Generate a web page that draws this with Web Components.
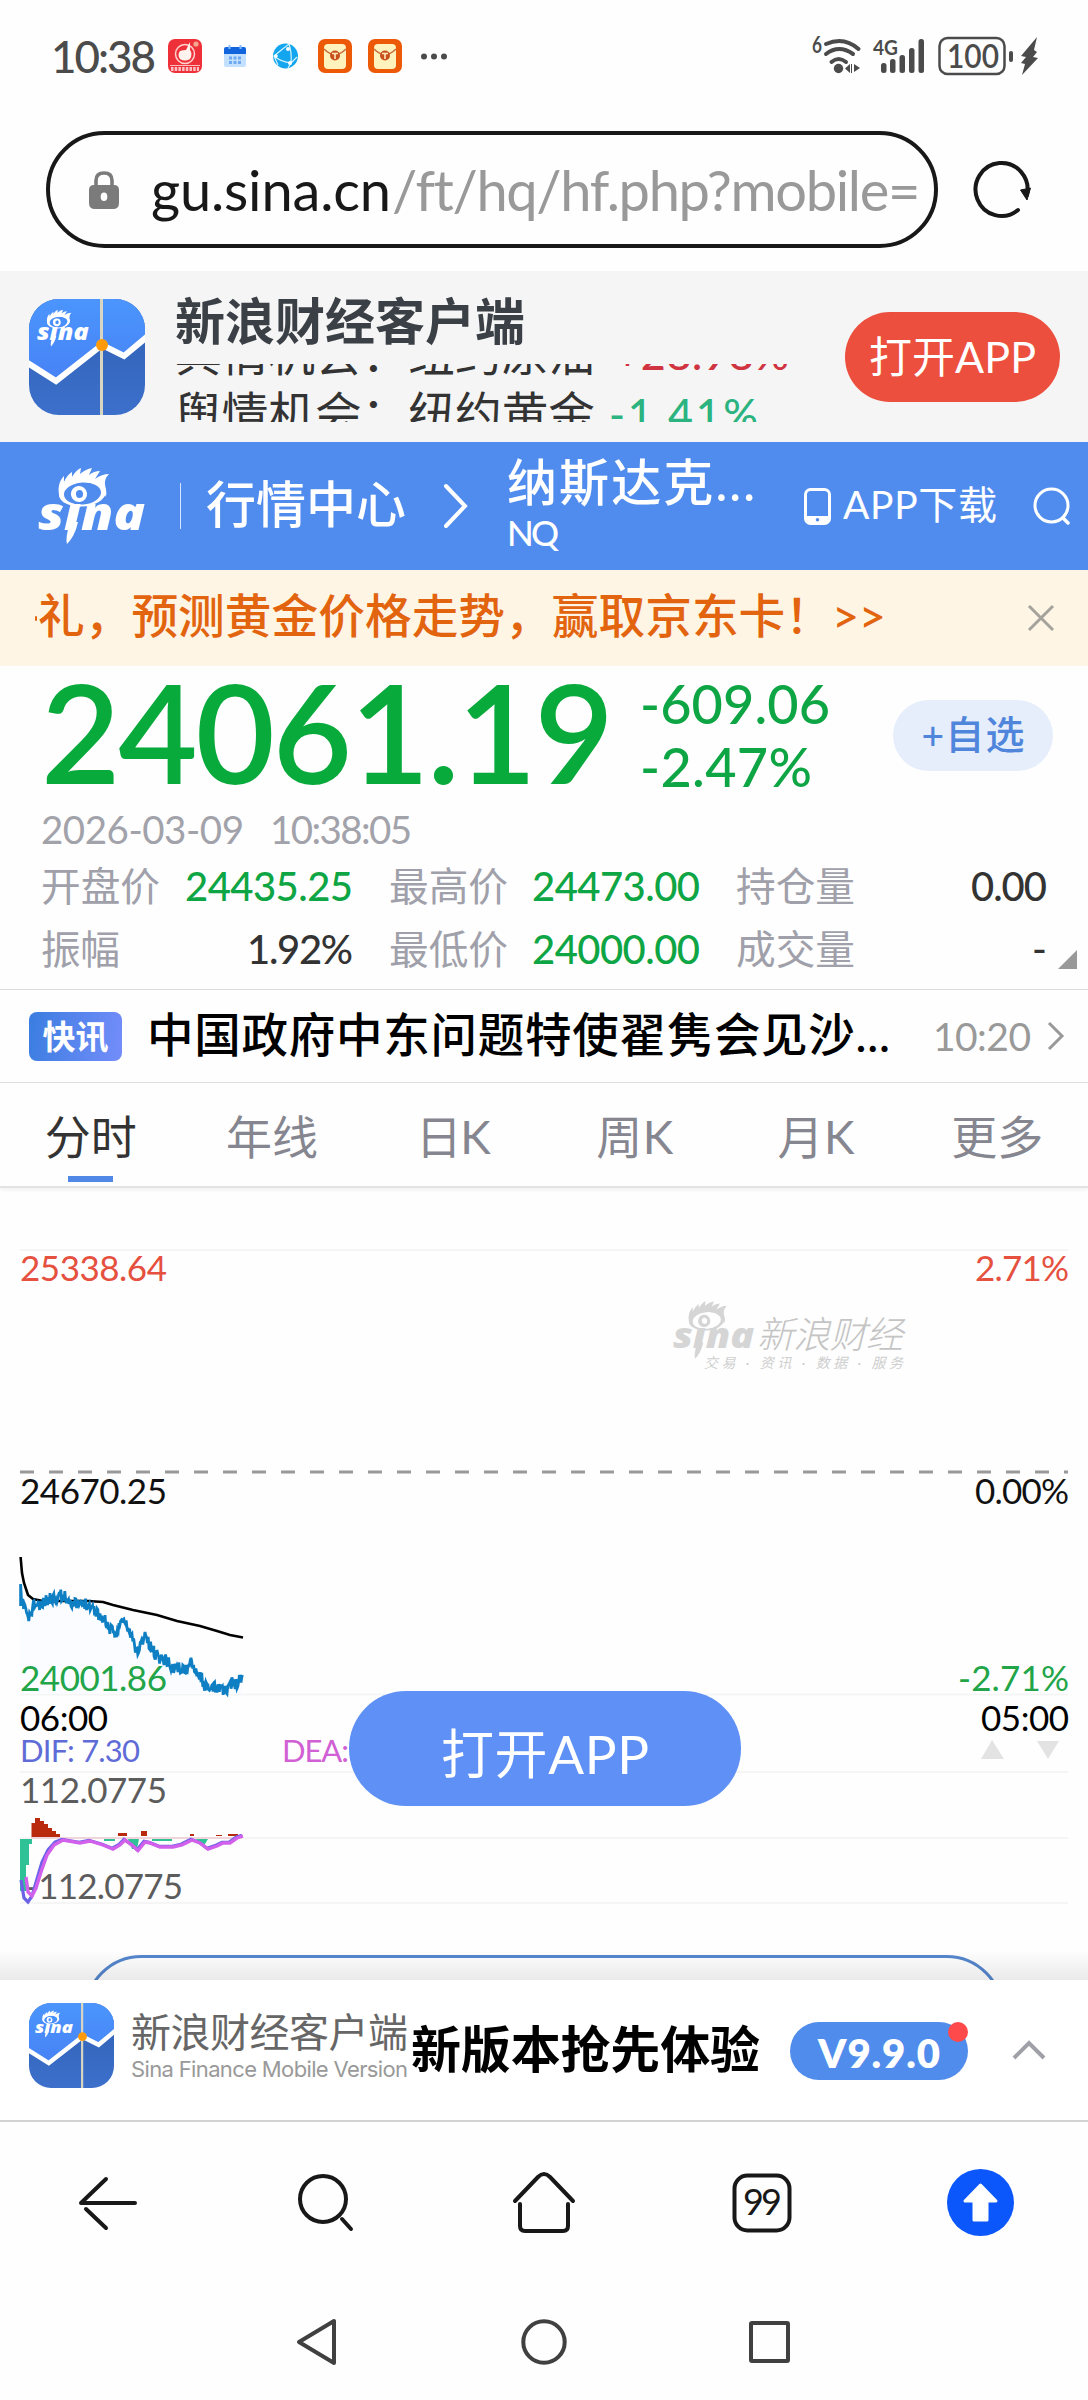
<!DOCTYPE html>
<html lang="zh-CN">
<head>
<meta charset="utf-8">
<title>纳斯达克 NQ</title>
<style>
    body {
        margin: 0;
        width: 1088px;
        height: 2400px;
        overflow: hidden;
        background: #fefefe;
        font-family: Lato, "Noto Sans CJK SC", sans-serif;
    }
</style>
</head>
<body>
<status-bar></status-bar>
<address-bar></address-bar>
<app-promo></app-promo>
<sina-header></sina-header>
<notice-bar></notice-bar>
<quote-panel></quote-panel>
<news-row time="10:20">中国政府中东问题特使翟隽会见沙...</news-row>
<chart-tabs></chart-tabs>
<quote-chart></quote-chart>
<download-bar></download-bar>
<browser-toolbar></browser-toolbar>
<system-nav></system-nav>

<script>
function define(name, html, ready) {
    customElements.define(name, class extends HTMLElement {
        connectedCallback() {
            if (this.shadowRoot) return;
            this.attachShadow({ mode: 'open' });
            this.shadowRoot.innerHTML = html;
            if (ready) ready.call(this, this.shadowRoot);
        }
    });
}

// One line of text, tracked so that it fills the width it is given
class FitText extends HTMLElement {
    connectedCallback() {
        const size = this.getAttribute('size');
        const width = parseFloat(this.getAttribute('width'));
        this.attachShadow({ mode: 'open' });
        this.shadowRoot.innerHTML = `
            <style>
                :host { display: block; flex: none; line-height: 1; font-size: ${size}px; width: ${width}px; }
                span { display: block; width: max-content; white-space: pre; }
            </style>
            <span><slot></slot></span>
        `;
        const span = this.shadowRoot.querySelector('span');
        const natural = span.getBoundingClientRect().width;
        const count = Array.from(this.textContent).length;
        if (count > 1) {
            const gap = (width - natural) / (count - 1);
            span.style.letterSpacing = gap + 'px';
            span.style.marginRight = -gap + 'px';
        }
    }
}
customElements.define('fit-text', FitText);

define('sina-logo', `
    <style>
        :host { display: block; color: #fff; }
        svg { display: block; width: 100%; height: 100%; overflow: visible; }
    </style>
    <svg viewBox="0 0 108 78" fill="currentColor">
        <path d="M22 31C19 22 21 14 26 9L26 15Q29 8 34 5L34 10Q38 3 43 1L42 7Q48 2 54 1L51 8Q56 4 62 4L57 12Q64 7 71 7Q66 12 67 18Q69 25 68 30Q64 15 45 15Q26 16 22 31Z"/>
        <path fill-rule="evenodd" d="M21 27A23.500 13.500 -5 0 0 68 25A23.500 13.500 -5 0 0 21 27ZM26 28A18.500 11 -5 0 1 63 25A18.500 11 -5 0 1 26 28Z"/>
        <path fill-rule="evenodd" d="M33 28A8 8 0 1 0 49 26A8 8 0 1 0 33 28ZM38 27.500A3.500 4 0 1 1 45 26.500A3.500 4 0 1 1 38 27.500Z"/>
        <path d="M32 55L40 55Q37 69 29 77Q27 72 32 55Z"/>
        <text x="0" y="63" font-family="Open Sans" font-size="46" font-weight="800" font-style="italic" textLength="107" lengthAdjust="spacingAndGlyphs">sına</text>
    </svg>
`);

define('app-icon', `
    <style>
        :host { display: block; position: relative; flex: none; }
        svg { display: block; width: 100%; height: 100%; }
        sina-logo { position: absolute; left: 7%; top: 9%; width: 45%; height: 33%; }
    </style>
    <svg viewBox="0 0 116 116">
        <defs>
            <clipPath id="round"><rect width="116" height="116" rx="30"/></clipPath>
            <linearGradient id="sky" x1="0" y1="0" x2="0" y2="1"><stop offset="0" stop-color="#4b95fd"/><stop offset="1" stop-color="#4782f5"/></linearGradient>
            <linearGradient id="sea" x1="0" y1="0" x2="0" y2="1"><stop offset="0" stop-color="#2f5fb2"/><stop offset="1" stop-color="#3c70cb"/></linearGradient>
        </defs>
        <g clip-path="url(#round)">
            <rect width="116" height="116" fill="url(#sea)"/>
            <path d="M0 0H116V41L95 57L73 47L27 83L0 65Z" fill="url(#sky)"/>
            <path d="M-3 63L27 82L73 46L95 57L119 37" fill="none" stroke="#fff" stroke-width="6"/>
            <path d="M72.5 0V116" stroke="#d8d6c0" stroke-width="3"/>
            <circle cx="73" cy="46" r="6" fill="#ff9b0b"/>
        </g>
    </svg>
    <sina-logo></sina-logo>
`);

define('status-bar', `
    <style>
        :host { display: flex; align-items: center; height: 112px; padding-left: 51px; color: #4b4b4b; }
        svg { display: block; flex: none; overflow: visible; }
        .signal { margin-left: 365px; }
        fit-text { font-weight: 500; }
    </style>
    <fit-text size="44" width="105">10:38</fit-text>
    <svg style="margin-left:12px" width="34" height="34" viewBox="0 0 34 34">
        <rect width="34" height="34" rx="7" fill="#ee3038"/>
        <circle cx="17" cy="15" r="9.5" fill="none" stroke="#ffd3cf" stroke-width="1.5"/>
        <path d="M12 12Q15 11 18 11L22 3L22 11Q25 15 22 20Q17 23 12 20Q9 16 12 12Z" fill="#fff3ee"/>
        <circle cx="28" cy="5" r="2.6" fill="#f6a690"/>
        <path d="M2 26.500H32" stroke="#fbb" stroke-width="1"/>
        <path d="M3 30H31" stroke="#fff" stroke-width="4" stroke-dasharray="2.500 1.200" opacity=".7"/>
    </svg>
    <svg style="margin-left:22px" width="22" height="23" viewBox="0 0 22 23">
        <rect y="4" width="22" height="18" rx="2" fill="#c3e1ff"/>
        <path d="M0 9V4Q0 2 2 2H20Q22 2 22 4V9Z" fill="#1264dc"/>
        <path d="M5.500 0V4M16.500 0V4" stroke="#86bcff" stroke-width="2"/>
        <path d="M5 13H17M5 17.500H17" stroke="#6fa9ef" stroke-width="3" stroke-dasharray="3 1.500"/>
    </svg>
    <svg style="margin-left:27px" width="25" height="26" viewBox="0 0 25 26">
        <circle cx="12.500" cy="13" r="12.500" fill="#13a6ee"/>
        <path d="M16 1Q12 4 1 13Q8 19 18 20Q19 10 16 1M18 20L24 14M18 20L15 25M1 13L5 22" fill="none" stroke="#d6f2ff" stroke-width="1.200"/>
        <g fill="#fff"><circle cx="15" cy="6" r="2"/><circle cx="3" cy="13" r="1.800"/><circle cx="17" cy="20" r="2"/></g>
    </svg>
    <svg style="margin-left:20px" width="84" height="34" viewBox="0 0 84 34">
        <defs><g id="env">
            <rect width="34" height="34" rx="7" fill="#ed5a07"/>
            <rect x="6" y="5" width="22" height="25" rx="4" fill="#fff2bd"/>
            <path d="M6 10Q17 21 28 10" fill="none" stroke="#c76a3c" stroke-width="1.500"/>
            <circle cx="17" cy="16.500" r="5" fill="#c8501c"/>
            <path d="M14 14.500H20M17 14.500V20" stroke="#ffe9c0" stroke-width="1.600"/>
        </g></defs>
        <use href="#env"/><use href="#env" x="50"/>
    </svg>
    <svg style="margin-left:19px" width="26" height="7"><g fill="#4b4b4b"><circle cx="3" cy="3.500" r="3"/><circle cx="13" cy="3.500" r="3"/><circle cx="23" cy="3.500" r="3"/></g></svg>
    <svg class="signal" width="226" height="40" viewBox="0 0 226 40" fill="#4b4b4b">
        <text x="0" y="17" font-size="22" font-weight="700" textLength="10" lengthAdjust="spacingAndGlyphs">6</text>
        <g fill="none" stroke="#4b4b4b" stroke-width="4" stroke-linecap="round">
            <path d="M14 8Q32 0 46.500 13M14 18Q27 8 41 18M19.500 26Q26.500 20 34 26"/>
        </g>
        <circle cx="26.500" cy="32.500" r="4.700"/>
        <path d="M38 28V37L33 32.500ZM42 28L48 32L42 36Z"/>
        <path d="M39.500 28V37" stroke="#4b4b4b"/>
        <text x="61" y="19" font-size="21" font-weight="700" textLength="25" lengthAdjust="spacingAndGlyphs">4G</text>
        <rect x="69" y="27" width="5.500" height="10" rx="2.500"/><rect x="78" y="23" width="5.500" height="14" rx="2.500"/>
        <rect x="87.500" y="19" width="5.500" height="18" rx="2.500"/><rect x="97" y="12" width="5.500" height="25" rx="2.500"/>
        <rect x="106.500" y="3" width="5.500" height="34" rx="2.500"/>
        <rect x="127.500" y="2" width="65" height="36" rx="8" fill="none" stroke="#4b4b4b" stroke-width="2.500"/>
        <text x="135" y="32" font-size="33" font-weight="600" textLength="52" lengthAdjust="spacingAndGlyphs">100</text>
        <rect x="197" y="15" width="4" height="11" rx="2"/>
        <path d="M225 1L209 20L214 21L209 27L213 28L210 39L226 22L221 21L225 16L222 14Z"/>
    </svg>
`);

define('address-bar', `
    <style>
        :host { display: flex; align-items: center; height: 159px; box-sizing: border-box; padding: 0 0 4px 46px; }
        .pill { display: flex; align-items: center; box-sizing: border-box; width: 892px; height: 117px; border: 4px solid #181818; border-radius: 59px; padding-left: 39px; }
        .host { margin-left: 32px; color: #181818; }
        .path { margin-left: 1px; color: #999; }
        .reload { margin-left: 34px; }
    </style>
    <div class="pill">
        <svg width="30" height="38" viewBox="0 0 30 38">
            <path d="M7 15V9.500Q7 2 15 2T23 9.500V15" fill="none" stroke="#7b7b7b" stroke-width="3.600"/>
            <path fill="#7b7b7b" fill-rule="evenodd" d="M5 14H25Q30 14 30 19V32Q30 38 24 38H6Q0 38 0 32V19Q0 14 5 14ZM15 21.500A3.300 4.200 0 1 0 15 30A3.300 4.200 0 1 0 15 21.500Z"/>
        </svg>
        <fit-text class="host" size="56" width="240">gu.sina.cn</fit-text>
        <fit-text class="path" size="56" width="527">/ft/hq/hf.php?mobile=</fit-text>
    </div>
    <svg class="reload" width="60" height="60" viewBox="0 0 60 60">
        <path d="M46 50A26 26.500 0 1 1 55 35" fill="none" stroke="#181818" stroke-width="4" stroke-linecap="round"/>
        <path d="M48.500 30L58.500 28L55 40Z" fill="#181818" stroke="#181818" stroke-linejoin="round"/>
    </svg>
`);

define('app-promo', `
    <style>
        :host { display: flex; align-items: center; height: 171px; background: #f5f5f5; }
        app-icon { width: 116px; height: 116px; margin-left: 29px; }
        .text { width: 640px; height: 171px; margin-left: 30px; }
        .title { margin-top: 25px; font-weight: 700; color: #3b4046; }
        /* the ticker is caught between two lines */
        .ticker { height: 58px; margin-top: 18px; overflow: hidden; color: #333; }
        .line { display: flex; align-items: center; height: 60px; gap: 14px; }
        .line:first-child { margin-top: -41px; }
        .up { color: #d03440; margin-left: 6px; }
        .down { color: #2bb380; }
        .up, .down { font-weight: 500; }
        .open { display: flex; align-items: center; justify-content: center; width: 215px; height: 90px; margin-left: 30px; border-radius: 45px; background: #ec4f3d; color: #fff; }
    </style>
    <app-icon></app-icon>
    <div class="text">
        <fit-text class="title" size="50" width="350">新浪财经客户端</fit-text>
        <div class="ticker">
            <div class="line"><fit-text size="46.700" width="420">舆情机会：纽约原油</fit-text><fit-text class="up" size="43" width="174">+28.98%</fit-text></div>
            <div class="line"><fit-text size="46.700" width="420">舆情机会：纽约黄金</fit-text><fit-text class="down" size="43" width="149">-1.41%</fit-text></div>
        </div>
    </div>
    <div class="open"><fit-text size="43" width="167">打开APP</fit-text></div>
`);

define('sina-header', `
    <style>
        :host { display: flex; align-items: center; height: 128px; background: #508cee; color: #fff; font-weight: 500; }
        svg { display: block; flex: none; }
        sina-logo { width: 108px; height: 78px; margin-left: 38px; }
        .rule { width: 1px; height: 46px; margin: 0 25px 0 34px; background: #d5e4ff; }
        .name { margin: 0 0 6px 38px; }
        .name fit-text + fit-text { margin-top: 8px; }
        .load { margin: 0 0 4px 12px; font-weight: 400; }
    </style>
    <sina-logo></sina-logo>
    <div class="rule"></div>
    <fit-text style="margin-bottom:4px" size="50" width="200">行情中心</fit-text>
    <svg style="margin-left:37px" width="26" height="46" viewBox="0 0 26 46"><path d="M3 3L22 23L3 43" fill="none" stroke="#fff" stroke-width="4" stroke-linecap="round"/></svg>
    <div class="name">
        <fit-text size="50" width="248">纳斯达克...</fit-text>
        <fit-text size="35" width="52">NQ</fit-text>
    </div>
    <svg style="margin-left:49px" width="27" height="37" viewBox="0 0 27 37">
        <rect x="1.500" y="1.500" width="24" height="34" rx="5" fill="none" stroke="#fff" stroke-width="3"/>
        <path fill-rule="evenodd" d="M2 28H25V35H2ZM13.500 30A1.700 1.700 0 1 0 13.500 33.600A1.700 1.700 0 1 0 13.500 30" fill="#fff"/>
    </svg>
    <fit-text class="load" size="39" width="154">APP下载</fit-text>
    <svg style="margin-left:36px" width="38" height="38" viewBox="0 0 38 38"><circle cx="18.500" cy="18.500" r="16.500" fill="none" stroke="#fff" stroke-width="3"/><path d="M30 31L35 36" stroke="#fff" stroke-width="3.500" stroke-linecap="round"/></svg>
`);

define('notice-bar', `
    <style>
        :host { display: flex; align-items: center; height: 96px; background: #fff5e5; color: #e2640f; font-weight: 500; }
        .dot { width: 2px; height: 5px; margin: 0 1px 0 35px; border-radius: 1px; background: #e2640f; }
        fit-text { margin-bottom: 6px; }
        svg { margin-left: 141px; }
    </style>
    <div class="dot"></div>
    <fit-text size="46.700" width="794">礼，预测黄金价格走势，赢取京东卡！</fit-text>
    <fit-text style="margin-left:0" size="47" width="54">&gt;&gt;</fit-text>
    <svg width="28" height="28" viewBox="0 0 28 28"><path d="M2 2L26 26M26 2L2 26" stroke="#a5a29c" stroke-width="3"/></svg>
`);

define('quote-panel', `
    <style>
        :host { display: block; height: 323px; border-bottom: 1px solid #dcdcdc; color: #333; position: relative; }
        .top { display: flex; align-items: center; height: 138px; }
        .price { margin: 0 0 8px 41px; color: #09aa3c; font-weight: 600; }
        .change { margin-left: 26px; color: #0ea544; font-weight: 500; }
        .change fit-text + fit-text { margin-top: 9px; }
        .add { display: flex; align-items: center; justify-content: center; width: 160px; height: 71px; border-radius: 36px; background: #e6eefb; color: #4f86db; margin-left: auto; margin-right: 35px; }
        .add fit-text { margin-bottom: 2px; font-weight: 500; }
        .date { display: flex; gap: 26px; height: 51px; align-items: center; margin-left: 41px; color: #a2a2aa; }
        .grid { display: grid; grid-template-columns: 312px 311px 311px; column-gap: 36px; grid-template-rows: 63px 63px; margin: -1px 0 0 41px; width: 1006px; }
        .cell { display: flex; justify-content: space-between; align-items: center; }
        .cell fit-text:first-child { color: #a0a0aa; }
        .green { color: #0ea544; }
        .cell fit-text:last-child { font-weight: 500; }
        .corner { position: absolute; right: 11px; bottom: 20px; }
    </style>
    <div class="top">
        <fit-text class="price" size="137" width="573">24061.19</fit-text>
        <div class="change"><fit-text size="54" width="190">-609.06</fit-text><fit-text size="54" width="172">-2.47%</fit-text></div>
        <div class="add"><fit-text size="39" width="103">+自选</fit-text></div>
    </div>
    <div class="date"><fit-text size="38.500" width="203">2026-03-09</fit-text><fit-text size="38.500" width="142">10:38:05</fit-text></div>
    <div class="grid"></div>
    <svg class="corner" width="19" height="19"><path d="M19 0V19H0Z" fill="#999"/></svg>
`, function(root) {
    const cells = [
        ['开盘价', 119, '24435.25', 168, 1], ['最高价', 119, '24473.00', 168, 1], ['持仓量', 119, '0.00', 76, 0],
        ['振幅', 79, '1.92%', 106, 0], ['最低价', 119, '24000.00', 168, 1], ['成交量', 119, '-', 15, 0]
    ];
    root.querySelector('.grid').innerHTML = cells.map(([label, lw, value, vw, green]) => `
        <div class="cell"><fit-text size="39.700" width="${lw}">${label}</fit-text><fit-text class="${green ? 'green' : ''}" size="40" width="${vw}">${value}</fit-text></div>
    `).join('');
});

define('news-row', `
    <style>
        :host { display: flex; align-items: center; height: 92px; border-bottom: 1px solid #dcdcdc; color: #000; }
        .tag { display: flex; align-items: center; justify-content: center; width: 93px; height: 49px; margin-left: 29px; border-radius: 8px; background: linear-gradient(100deg, #3a7de0, #748dfa); color: #fff; font-weight: 700; }
        .title { margin: 0 0 4px 25px; font-weight: 500; }
        .time { margin-left: 43px; color: #999; }
        svg { margin-left: 16px; }
    </style>
    <div class="tag"><fit-text size="33" width="66">快讯</fit-text></div>
`, function(root) {
    root.innerHTML += `
        <fit-text class="title" size="46.500" width="743">${this.textContent}</fit-text>
        <fit-text class="time" size="39" width="98">${this.getAttribute('time')}</fit-text>
        <svg width="18" height="30" viewBox="0 0 18 30"><path d="M2 2L15 15L2 28" fill="none" stroke="#999" stroke-width="3"/></svg>
    `;
});

define('chart-tabs', `
    <style>
        :host { display: grid; grid-template-columns: repeat(6, 1fr); height: 103px; border-bottom: 2px solid #e3e3e3; box-shadow: 0 2px 4px #f0f0f0; color: #868690; }
        div { display: flex; flex-direction: column; align-items: center; }
        fit-text { margin-top: 31px; }
        .on { color: #333; }
        .on::after { content: ""; width: 45px; height: 6px; margin-top: 16px; background: #5088e8; }
    </style>
    <div class="on"><fit-text size="46" width="92">分时</fit-text></div>
    <div><fit-text size="46" width="92">年线</fit-text></div>
    <div><fit-text size="46" width="75">日K</fit-text></div>
    <div><fit-text size="46" width="77">周K</fit-text></div>
    <div><fit-text size="46" width="77">月K</fit-text></div>
    <div><fit-text size="46" width="92">更多</fit-text></div>
`);

// The svg keeps page coordinates: its viewBox starts where the chart does
define('quote-chart', `
    <style>
        :host { display: block; position: relative; height: 792px; overflow: hidden; }
        svg { display: block; }
        .mark { position: absolute; left: 673px; top: 112px; width: 82px; height: 60px; color: #d5d5d5; }
        .open { position: absolute; left: 349px; top: 503px; width: 392px; height: 115px; border-radius: 57px; display: flex; align-items: center; justify-content: center; background: #5e90f5; color: #fff; }
        .open fit-text { margin-top: 10px; }
        .more { position: absolute; left: 84px; top: 767px; width: 920px; height: 115px; box-sizing: border-box; border: 3px solid #5586cc; border-radius: 58px; }
        .shade { position: absolute; left: 0; right: 0; bottom: 0; height: 30px; background: linear-gradient(rgba(0,0,0,0), rgba(0,0,0,.08)); }
    </style>
    <svg width="1088" height="792" viewBox="0 1188 1088 792">
        <g stroke="#f5f5f5" stroke-width="2"><path d="M20 1250H1068M20 1694.500H1068M20 1772H1068M20 1838H1068M20 1903H1068"/></g>
        <path d="M20 1472H1068" stroke="#999" stroke-width="3" stroke-dasharray="14 15"/>
        <path id="area" fill="#fafcff"/>
        <path id="avg" fill="none" stroke="#000" stroke-width="2.600"/>
        <path id="price" fill="none" stroke="#0f7fc4" stroke-width="2.800"/>
        <g font-size="35">
            <text x="20" y="1281" fill="#e5503f" textLength="147">25338.64</text>
            <text x="975" y="1281" fill="#e5503f" textLength="94">2.71%</text>
            <text x="20" y="1503.500" fill="#111" textLength="147">24670.25</text>
            <text x="975" y="1503.500" fill="#111" textLength="94">0.00%</text>
            <text x="20" y="1691" fill="#22a548" textLength="147">24001.86</text>
            <text x="958" y="1691" fill="#22a548" textLength="111">-2.71%</text>
            <text x="20" y="1731" fill="#000" textLength="88">06:00</text>
            <text x="981" y="1731" fill="#000" textLength="88">05:00</text>
            <text x="20" y="1803" fill="#5c5c5c" textLength="147">112.0775</text>
            <text x="26" y="1899" fill="#5c5c5c" textLength="157">-112.0775</text>
            <text x="20" y="1762" font-size="31" fill="#5f6bd6" textLength="120">DIF: 7.30</text>
            <text x="282" y="1762" font-size="31" fill="#d160d4" textLength="67">DEA:</text>
        </g>
        <path d="M981 1759L992 1740L1004 1759ZM1037 1741H1059L1048 1759Z" fill="#e3e3e3"/>
        <path d="M20 1839H32V1844H29V1865H26V1891H20ZM104 1839H115V1841H104ZM128 1839H139L137 1849H132ZM152 1839H172V1841H152ZM196 1839H208L205 1844H200Z" fill="#2fc296"/>
        <path d="M31.500 1837V1823H35V1818H40V1821H44V1824H48V1828H52V1831H56V1834H60V1837ZM118 1836V1833H127V1836ZM141 1836V1831H147V1836ZM190 1836V1834H194V1836ZM216 1836V1835H222V1836ZM228 1836V1834H238V1836Z" fill="#b92a0d"/>
        <path d="M31 1838H242" stroke="#f0d5da" stroke-width="2"/>
        <path id="dif" fill="none" stroke="#6b62e8" stroke-width="3.200"/>
        <path id="dea" fill="none" stroke="#d160ea" stroke-width="3.400"/>
        <g fill="#cfcfcf" font-style="italic">
            <text x="757" y="1348" font-size="37" font-weight="300" fill="#c4c4c4" textLength="146">新浪财经</text>
            <text x="704" y="1368" font-size="14" textLength="199">交易 · 资讯 · 数据 · 服务</text>
        </g>
    </svg>
    <sina-logo class="mark"></sina-logo>
    <div class="more"></div>
    <div class="shade"></div>
    <div class="open"><fit-text size="53" width="208">打开APP</fit-text></div>
`, function(root) {
    const toPath = points => 'M' + points.map(p => p.join(' ')).join('L');
    const trend = [[20.6,1590],[22,1604],[25,1605],[28,1620],[31,1614],[34,1604],[41,1607],[46,1600],[53,1598],[60,1595],[67,1598],[75,1604],[80,1605],[87,1603],[93,1608],[100,1616],[105,1620],[110,1630],[115,1634],[119,1627],[123,1620],[128,1628],[133,1641],[137,1652],[142,1642],[145,1633],[149,1645],[154,1652],[160,1658],[167,1660],[172,1668],[178,1668],[187,1670],[192,1661],[197,1672],[202,1679],[207,1690],[213,1688],[220,1687],[227,1692],[232,1683],[237,1684],[242.500,1674]];
    let seed = 11;
    const random = () => (seed = (seed * 16807) % 2147483647) / 2147483647;
    const price = [[20.600, 1585], [20.600, 1606]];
    for (let i = 0; i < trend.length - 1; i++) {
        const [x0, y0] = trend[i];
        const [x1, y1] = trend[i + 1];
        for (let x = x0; x < x1; x += 0.8) {
            const y = y0 + (y1 - y0) * (x - x0) / (x1 - x0) + (random() - 0.5) * 12;
            price.push([x.toFixed(1), Math.min(y, 1695).toFixed(1)]);
        }
    }
    price.push([242.500, 1675]);
    const avg = [[20.6,1557],[22,1573],[24,1583],[28,1595],[33,1599],[43,1601],[88,1601],[103,1602],[113,1605],[133,1610],[157,1615],[177,1621],[200,1626],[217,1631],[230,1635],[243,1637.600]];
    const tail = [[63,1840],[80,1843],[90,1841],[103,1845],[113,1849],[120,1845],[125,1840],[132,1845],[138,1850.500],[145,1842],[150,1843],[160,1847],[173,1847],[182,1845],[192,1840],[200,1843],[208,1849],[217,1846],[223,1843],[230,1843],[237,1838],[243,1836]];
    const dif = [[21,1880],[24,1898],[28,1902],[32,1896],[37,1879],[42,1862],[48,1850],[55,1842]].concat(tail.map(([x, y]) => [x - 1, y - 0.700]));
    const dea = [[26,1877],[28,1892],[32,1896],[36,1888],[41,1872],[47,1855],[54,1845]].concat(tail);
    root.getElementById('area').setAttribute('d', toPath([[20.6, 1694], ...trend, [242.5, 1694]]) + 'Z');
    root.getElementById('avg').setAttribute('d', toPath(avg));
    root.getElementById('price').setAttribute('d', toPath(price));
    root.getElementById('dif').setAttribute('d', toPath(dif));
    root.getElementById('dea').setAttribute('d', toPath(dea));
});

define('download-bar', `
    <style>
        :host { display: flex; align-items: center; height: 140px; border-bottom: 2px solid #d2d2d2; background: #fff; }
        app-icon { width: 85px; height: 85px; margin: 0 0 10px 29px; }
        .brand { margin: 0 0 8px 17px; color: #666; }
        .brand fit-text + fit-text { margin-top: 6px; color: #999; font-family: Inter, sans-serif; }
        .slogan { margin: 0 0 2px 3px; font-weight: 700; color: #000; }
        .version { display: flex; align-items: center; justify-content: center; position: relative; width: 178px; height: 58px; margin: 2px 0 0 30px; border-radius: 29px; background: #508cec; color: #fff; font-weight: 800; }
        .version::after { content: ""; position: absolute; top: 0; right: 0; width: 20px; height: 20px; border-radius: 50%; background: #ff4a4c; }
        .version fit-text { margin-top: 3px; }
        svg { margin-left: 43px; }
    </style>
    <app-icon></app-icon>
    <div class="brand">
        <fit-text size="40" width="277">新浪财经客户端</fit-text>
        <fit-text size="22" width="277">Sina Finance Mobile Version</fit-text>
    </div>
    <fit-text class="slogan" size="50" width="349">新版本抢先体验</fit-text>
    <div class="version"><fit-text size="40" width="122">V9.9.0</fit-text></div>
    <svg width="36" height="22" viewBox="0 0 36 22"><path d="M3 19L18 4L33 19" fill="none" stroke="#a0a0a8" stroke-width="4"/></svg>
`);

define('browser-toolbar', `
    <style>
        :host { display: grid; grid-template-columns: repeat(5, 218px); justify-content: center; align-items: center; height: 161px; }
        svg { display: block; justify-self: center; fill: none; stroke: #181818; stroke-width: 4; stroke-linecap: round; stroke-linejoin: round; }
    </style>
    <svg width="60" height="60" viewBox="0 0 60 60"><path d="M57 30H3L28 6M8 36L28 55"/></svg>
    <svg width="60" height="60" viewBox="0 0 60 60"><circle cx="27" cy="26" r="23"/><path d="M46 46L55 56"/></svg>
    <svg width="64" height="64" viewBox="0 0 64 64"><path d="M3 30L26 6Q32 0 38 6L61 30M8 33V55Q8 60 13 60H51Q56 60 56 55V33"/></svg>
    <svg width="62" height="62" viewBox="0 0 62 62"><rect x="3.500" y="3.500" width="55" height="55" rx="13"/><text x="12" y="43" font-size="36" fill="#181818" stroke="none" textLength="39">99</text></svg>
    <svg width="67" height="67" viewBox="0 0 67 67"><circle cx="33.500" cy="33.500" r="33.500" fill="#0b57fb" stroke="none"/><path d="M33.500 16L49 32H40V51H27V32H18Z" fill="#fff" stroke="#fff" stroke-width="3"/></svg>
`);

define('system-nav', `
    <style>
        :host { display: flex; align-items: center; height: 117px; padding-left: 295px; }
        svg { display: block; flex: none; fill: none; stroke: #404040; stroke-width: 4; stroke-linejoin: round; }
    </style>
    <svg width="42" height="50" viewBox="0 0 42 50"><path d="M39 4V46L4 25Z"/></svg>
    <svg style="margin-left:182px" width="50" height="50" viewBox="0 0 50 50"><circle cx="25" cy="25" r="20.700"/></svg>
    <svg style="margin-left:179px" width="44" height="44" viewBox="0 0 44 44"><rect x="3" y="3" width="37" height="38" rx="1"/></svg>
`);
</script>
</body>
</html>
